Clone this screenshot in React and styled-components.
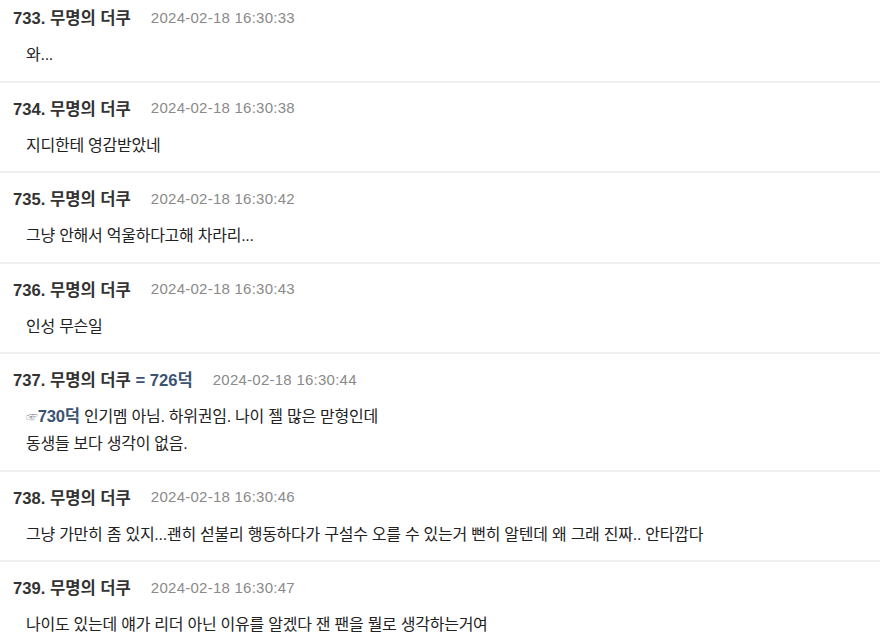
import React from 'react';
import styled, { createGlobalStyle } from 'styled-components';

const GlobalStyle = createGlobalStyle`
  html, body {
    margin: 0;
    padding: 0;
    background: #fff;
  }
  body {
    font-family: "Liberation Sans", "Noto Sans CJK KR", sans-serif;
    color: #222;
  }
`;

const List = styled.div`
  width: 880px;
`;

const Post = styled.div`
  padding: ${props => props.first ? '7px' : '15px'} 13px 12.5px;
  border-bottom: 2px solid #efefef;
`;

const Header = styled.div`
  display: flex;
  align-items: center;
  height: 20px;
  gap: 20px;
`;

const Name = styled.span`
  font-size: 16.6px;
  font-weight: 700;
  color: #333;
`;

const Ref = styled.span`
  color: #3b5472;
`;

const Date = styled.span`
  font-size: 15px;
  color: #8a8a8a;
  letter-spacing: 0.25px;
`;

const Body = styled.div`
  margin-top: 14px;
  padding-left: 13px;
  font-size: 16px;
  line-height: 27px;
  color: #222;
  letter-spacing: -0.25px;
`;

const Pointer = styled.span`
  font-size: 12px;
  line-height: 16px;
  color: #8a97a8;
`;

const Anchor = styled.span`
  font-weight: 700;
  font-size: 16.6px;
  line-height: 16px;
  color: #3b5472;
`;

const posts = [
  { no: 733, date: '2024-02-18 16:30:33', lines: ['와...'] },
  { no: 734, date: '2024-02-18 16:30:38', lines: ['지디한테 영감받았네'] },
  { no: 735, date: '2024-02-18 16:30:42', lines: ['그냥 안해서 억울하다고해 차라리...'] },
  { no: 736, date: '2024-02-18 16:30:43', lines: ['인성 무슨일'] },
  { no: 737, date: '2024-02-18 16:30:44', ref: '726덕', anchor: '730덕', lines: [' 인기멤 아님. 하위권임. 나이 젤 많은 맏형인데', '동생들 보다 생각이 없음.'] },
  { no: 738, date: '2024-02-18 16:30:46', lines: ['그냥 가만히 좀 있지...괜히 섣불리 행동하다가 구설수 오를 수 있는거 뻔히 알텐데 왜 그래 진짜.. 안타깝다'] },
  { no: 739, date: '2024-02-18 16:30:47', lines: ['나이도 있는데 얘가 리더 아닌 이유를 알겠다 잰 팬을 뭘로 생각하는거여'] },
];

export default function App() {
  return (
    <List>
      <GlobalStyle />
      {posts.map((p, i) => (
        <Post key={p.no} first={i === 0}>
          <Header>
            <Name>
              {p.no}. 무명의 더쿠{p.ref && <Ref> = {p.ref}</Ref>}
            </Name>
            <Date>{p.date}</Date>
          </Header>
          <Body>
            {p.lines.map((line, j) => (
              <div key={j}>
                {j === 0 && p.anchor && (
                  <>
                    <Pointer>☞</Pointer>
                    <Anchor>{p.anchor}</Anchor>
                  </>
                )}
                {line}
              </div>
            ))}
          </Body>
        </Post>
      ))}
    </List>
  );
}
